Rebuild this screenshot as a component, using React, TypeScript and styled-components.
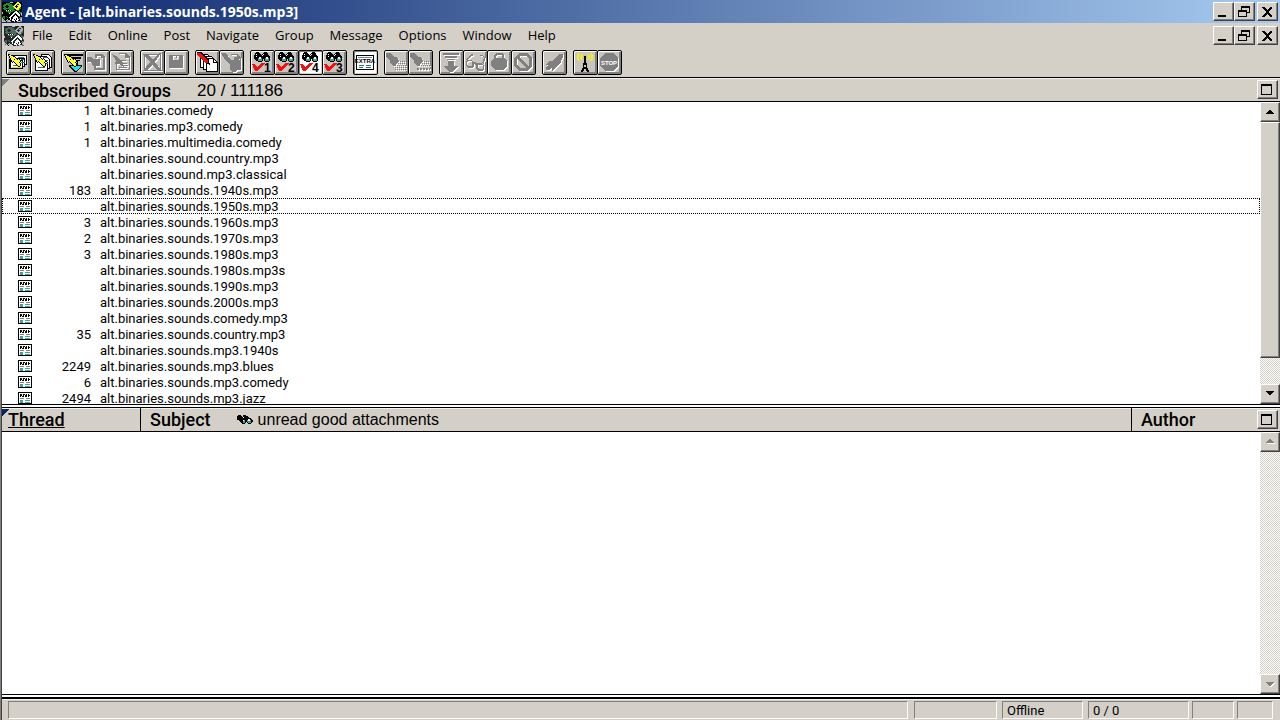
import React from "react";
import styled, { createGlobalStyle, css } from "styled-components";

const FACE = "#d4d0c8";
const SHADOW = "#808080";
const DARK = "#404040";
const MENU = '"Open Sans", "Noto Sans", sans-serif';
const LIST = 'Roboto, "Liberation Sans", sans-serif';
const ARIAL = '"Liberation Sans", Arial, sans-serif';

const Global = createGlobalStyle`
  * { box-sizing: border-box; }
  html, body { margin: 0; height: 100%; }
  #root { height: 100%; }
  button { font: inherit; color: inherit; padding: 0; margin: 0; border: 0; border-radius: 0; background: none; }
`;

const Frame = styled.div`
  display: flex;
  flex-direction: column;
  min-height: 100vh;
  height: 100%;
  background: ${FACE};
  border-left: 1px solid ${SHADOW};
  box-shadow: inset 1px 0 0 ${DARK};
  padding-left: 1px;
  color: #000;
  overflow: hidden;
`;

const TitleBar = styled.header`
  display: flex;
  align-items: center;
  height: 23px;
  padding-right: 2px;
  background: linear-gradient(90deg, #0a246a, #a6caf0);
  color: #fff;
`;

const Title = styled.h1`
  flex: 1;
  margin: 0 0 0 3px;
  font: bold 14px/20px "Open Sans", "Noto Sans", sans-serif;
  white-space: nowrap;
`;

const MenuRow = styled.div`
  display: flex;
  align-items: center;
  height: 25px;
  padding: 0 2px;
`;

const Menus = styled.nav`
  display: flex;
  flex: 1;
`;

const MenuItem = styled.button`
  padding: 0 8px 2px;
  font: 13px/20px ${MENU};
`;

const WindowButtons = styled.div`
  display: flex;
  & > :last-child { margin-left: 2px; }
`;

const raised = css`
  background: ${FACE};
  border: 1px solid;
  border-color: #fff ${DARK} ${DARK} #fff;
  box-shadow: inset -1px -1px 0 ${SHADOW};
`;

const CaptionButton = styled.button`
  ${raised}
  display: flex;
  align-items: center;
  justify-content: center;
  width: 21px;
  height: 19px;
  flex: none;
`;

const Toolbar = styled.div`
  display: flex;
  gap: 6px;
  height: 29px;
  padding: 2px 4px;
`;

const ToolGroup = styled.div`
  display: flex;
`;

const ToolButton = styled.button<{ $pressed?: boolean }>`
  width: 25px;
  height: 25px;
  border: 1px solid #000;
  border-radius: 2px;
  background: ${(p) => (p.$pressed ? "#fff" : "#c8c5be")};
  box-shadow: ${(p) =>
    p.$pressed
      ? `inset 1px 1px 0 ${SHADOW}, inset -1px -1px 0 ${FACE}`
      : `inset 1px 1px 0 #fff, inset -2px -2px 0 ${SHADOW}`};
  & + & { margin-left: -1px; }
  svg { display: block; }
`;

const Pane = styled.section<{ $grow: number }>`
  display: flex;
  flex-direction: column;
  flex: ${(p) => p.$grow} 1 0;
  min-height: 0;
  border-top: 1px solid #000;
  border-bottom: 1px solid #000;
`;

const PaneHead = styled.div<{ $fold: string }>`
  display: flex;
  align-items: stretch;
  height: 24px;
  flex: none;
  border-bottom: 1px solid #000;
  background: linear-gradient(135deg, ${(p) => p.$fold} 6px, transparent 6px) ${FACE};
  box-shadow: inset 0 1px 0 #f4f2ee;
`;

const GroupTitle = styled.h2`
  margin: 0 26px 0 16px;
  font: 500 18px/25px ${LIST};
`;

const GroupTotals = styled.span`
  flex: 1;
  font: 17px/25px ${ARIAL};
`;

const ColumnHead = styled.button<{ $grow?: boolean; $width?: number }>`
  flex: ${(p) => (p.$grow ? "1" : `0 0 ${p.$width}px`)};
  display: flex;
  align-items: center;
  text-align: left;
  font: 500 18px/24px ${LIST};
  padding-left: 9px;
  padding-top: 2px;
  border-left: 1px solid #000;
  &:first-child { border-left: 0; padding-left: 6px; text-decoration: underline; }
`;

const FilterNote = styled.span`
  display: flex;
  align-items: center;
  gap: 5px;
  margin-left: 26px;
  font: 16px/24px ${ARIAL};
`;

const HeadEnd = styled.div`
  display: flex;
  align-items: center;
  padding-right: 2px;
`;

const PaneBody = styled.div`
  display: flex;
  flex: 1;
  min-height: 0;
  background: #fff;
`;

const ListArea = styled.div`
  flex: 1;
  min-width: 0;
  overflow: hidden;
`;

const GroupTable = styled.table`
  width: 100%;
  border-collapse: collapse;
  table-layout: fixed;
  font: 13px/15px ${LIST};
`;

const GroupRow = styled.tr<{ $current: boolean }>`
  height: 16px;
  ${(p) => p.$current && "outline: 1px dotted #000; outline-offset: -1px;"}
`;

const IconCell = styled.td`
  width: 46px;
  padding: 0 0 0 16px;
  svg { display: block; }
`;

const CountCell = styled.td`
  width: 43px;
  padding: 1px 0 0;
  text-align: right;
`;

const NameCell = styled.td`
  padding: 1px 0 0 9px;
  white-space: nowrap;
`;

const Splitter = styled.div`
  height: 2px;
  flex: none;
  background: #fff;
`;

const ScrollTrack = styled.div`
  display: flex;
  flex-direction: column;
  width: 20px;
  flex: none;
  background: repeating-conic-gradient(#fff 0 25%, ${FACE} 0 50%) 0 0 / 2px 2px;
`;

const ScrollButton = styled.button`
  ${raised}
  display: flex;
  align-items: center;
  justify-content: center;
  height: 20px;
  flex: none;
`;

const ScrollRun = styled.div`
  flex: 1;
`;

const Thumb = styled.div`
  ${raised}
  height: 90%;
`;

const StatusBar = styled.footer`
  display: flex;
  flex: none;
  height: 23px;
  padding: 2px 7px 1px 6px;
  border-top: 2px solid #000;
  box-shadow: inset 0 1px 0 #f4f2ee;
  font: 13px/18px ${LIST};
`;

const StatusCell = styled.div<{ $width?: number; $gap?: number }>`
  flex: ${(p) => (p.$width ? `0 0 ${p.$width}px` : "1")};
  margin-left: ${(p) => p.$gap ?? 0}px;
  padding-left: 4px;
  border: 1px solid;
  border-color: ${SHADOW} #fff #fff ${SHADOW};
`;

/* ---------- drawings ---------- */

type PixelProps = { rows: string[]; colors: Record<string, string>; x?: number; y?: number };

/** Draws a small bitmap, one character for each dot. */
function Pixels({ rows, colors, x = 0, y = 0 }: PixelProps) {
  const dots: React.ReactNode[] = [];
  rows.forEach((row, r) => {
    let c = 0;
    while (c < row.length) {
      const ch = row[c];
      let n = 1;
      while (row[c + n] === ch) n++;
      if (colors[ch]) dots.push(<rect key={`${r}-${c}`} x={x + c} y={y + r} width={n} height={1} fill={colors[ch]} />);
      c += n;
    }
  });
  return <g shapeRendering="crispEdges">{dots}</g>;
}

const INK = { "#": "#000", w: "#fff", t: "#3f9f9a", g: "#808080", y: "#ffff30", c: "#00d8e8", r: "#e01010", G: "#209020", l: "#c0c0c0" };

const BINOCULARS = [
  "..###.....###...",
  ".#####...#####..",
  ".#w####.#w####..",
  "########w######.",
  "##w#############",
  "#####ww#####ww##",
  "####twwt###twwt#",
  ".###tttt#.#tttt#",
  "..##tttt#.#tttt#",
  "....####...####.",
];

const SMALL_BINOCULARS = [
  ".###..###.......",
  "#####.#####.....",
  "######w#####....",
  "##############..",
  "###########ww##.",
  "..####wt##twwt##",
  "...###tt##tttt##",
  "....##tt#.#ttt#.",
  ".....###...###..",
];

const NEWS = [
  "##############",
  "#wwwwwwwwwwww#",
  "#w##w##w#w#ww#",
  "#w##w#w##w##w#",
  "#w#w##w##w#ww#",
  "#wwwwwwwwwwww#",
  "#wggggwwggggw#",
  "#wwwwwwwwwwww#",
  "#wtttwwtttttw#",
  "#wtttwwwwwwww#",
  "#wtttwwtttttw#",
  "##############",
];

const APP = [
  "########lll####yy###",
  "####GGGG######yyyy##",
  "##GGGGGGGG###yy##yy#",
  "#GGG##GGGGG#yy#yyyy#",
  "#GG####GGGGyy###yyy#",
  "##GG##GGGGGGyy#yyyG#",
  "#GGGGGGGGGGGGyyyyGG#",
  "##GG###GGGGG##yyyG##",
  "####w#w#w#GGG##GG###",
  "####GGGGGGG##lw##G##",
  "l#####GGG###wwww#GGG",
  "l######w###ww#www#Gl",
  "##########ww###www#l",
  "#########ww##w##ww#g",
  "#GG#G###ww##www##g##",
  "GGG##G#ww##wwwww##gg",
  "l#G#####w##www#w#ggl",
  "ll###l##w#ww#w#ww#ll",
  "lgl#lgll##www#ww##gl",
  "llll#llll###l##lllgg",
];

function Icon({ rows, colors = INK, width, height }: { rows: string[]; colors?: Record<string, string>; width: number; height: number }) {
  return (
    <svg width={width} height={height} viewBox={`0 0 ${width} ${height}`} aria-hidden="true">
      <Pixels rows={rows} colors={colors} />
    </svg>
  );
}

function Tool({ children }: { children: React.ReactNode }) {
  return (
    <svg width="23" height="23" viewBox="0 0 23 23" aria-hidden="true" shapeRendering="crispEdges">
      {children}
    </svg>
  );
}

/** A disabled drawing: a white copy one dot down and right of the grey one. */
function Engraved({ children }: { children: React.ReactNode }) {
  return (
    <Tool>
      <g transform="translate(1 1)" fill="#fff" stroke="#fff" strokeWidth="0">{children}</g>
      <g fill="#808080" stroke="#808080" strokeWidth="0">{children}</g>
    </Tool>
  );
}

const BOLT = [
  "##...........",
  "#yy##........",
  ".#yyy##......",
  ".#yyyyy#.....",
  "..#yyyyy#.#..",
  "..#yyy#yy#y#.",
  "...#yyyyyyyy#",
  "...#y#yyyyyy#",
  "....#.#yyyy#.",
  ".......#yyyy#",
  "........#yyy#",
  ".........#yy#",
  "..........##.",
];

const Bolt = ({ x = 0 }: { x?: number }) => <Pixels rows={BOLT} colors={INK} x={x + 1} y={3} />;

const icons: Record<string, React.ReactNode> = {
  getHeaders: (
    <Tool>
      <path d="M6 4h14v10h-14z M4 6h14v10h-14z M2 8h14v10h-14z" fill="#000" />
      <path d="M7 5h12v8h-12z" fill="#fff" />
      <path d="M5 7h12v8h-12z" fill="#fff" stroke="#000" strokeWidth="1" />
      <path d="M3 9h12v8h-12z" fill="#fff" stroke="#000" strokeWidth="1" />
      <path d="M11 6h6v1h-6zM14 8h3v1h-3zM14 11h4v1h-4zM6 14h8v1h-8z" fill="#287878" />
      <path d="M5 16h10v1h-10z" fill="#e8e800" />
      <Bolt />
    </Tool>
  ),
  getBodies: (
    <Tool>
      <path d="M10 3h7l3 3v10h-10z" fill="#fff" stroke="#000" />
      <path d="M7 5h8l3 3v9h-11z" fill="#fff" stroke="#000" />
      <path d="M4 8h9l3 3v8h-12z" fill="#fff" stroke="#000" />
      <path d="M12 6h4v1h-4zM13 9h4v1h-4zM14 12h3v1h-3zM7 16h7v1h-7z" fill="#287878" />
      <Bolt x={1} />
    </Tool>
  ),
  getMarked: (
    <Tool>
      <path d="M4 3h17v2h-17zM6 6h13v2h-13zM8 9h10v1h-10z" fill="#000" />
      <path d="M11 10h5v4h4v2l-6 5h-1l-6 -5v-2h4z" fill="#000" />
      <path d="M12 11h3v4h4l-5 5h-1l-5 -5h4z" fill="#20e0f0" />
      <Bolt x={1} />
    </Tool>
  ),
  cancelDoc: (
    <Engraved>
      <path d="M9 3h7l3 3v13h-11v-4h2v2h7v-10h-2v-2h-4v2h-2z" />
      <path d="M1 6h4l3 2h6v7h-7l-2-4h-4z" />
    </Engraved>
  ),
  boltDoc: (
    <Engraved>
      <path d="M9 2h7l4 4v13h-14v-6h1v5h12v-11h-4v-4h-6z" />
      <path d="M2 3l6 3l2 3l2 1l3 7l-6-4h-4l1-3z" />
      <path d="M11 9h5v1h-5zM13 12h4v1h-4zM14 14h4v1h-4zM9 16h8v1h-8z" />
    </Engraved>
  ),
  remove: (
    <Engraved>
      <path d="M3 3h17v17h-17zM4 4v15h15v-15z" fillRule="evenodd" />
      <path d="M2 3h4l6 6l6-7h2l-6 9l7 9h-4l-6-6l-6 6h-3l7-9z" />
    </Engraved>
  ),
  save: (
    <Engraved>
      <path d="M4 4h13l1 1v12h-14zM8 5v4h6v-4h-2v2h-1v-2z" fillRule="evenodd" />
    </Engraved>
  ),
  markRead: (
    <Tool>
      <path d="M4 3h7l2 2v11h-9z" fill="#fff" stroke="#000" />
      <path d="M7 5h8l2 2v11h-10z" fill="#fff" stroke="#000" />
      <path d="M10 7h7l4 4v9h-11z" fill="#fff" stroke="#000" />
      <path d="M17 7v4h4" fill="none" stroke="#000" />
      <path d="M1 1h4l8 8l1 5l-5-2l-8-8z" fill="#000" />
      <path d="M1 2h3l8 8v2h-2l-9-8z" fill="#e81010" />
    </Tool>
  ),
  markKeep: (
    <Engraved>
      <path d="M1 2h5l5 7h3v-3h2l4 4v9h-3l-2 2h-3l-2-3v-4l-6-7z" />
      <path d="M11 3h6l4 4v12h-1v-11h-3v-4h-6z" />
    </Engraved>
  ),
  usenet: (
    <Tool>
      <path d="M2 4h18v15h-18zM3 5v13h16v-13z" fillRule="evenodd" />
      <text x="11" y="12" textAnchor="middle" fontFamily="Liberation Sans, sans-serif" fontSize="6" fontWeight="bold">EXTRA</text>
      <path d="M5 14h5v1h-5zM5 16h4v1h-4zM12 14h5v1h-5zM12 16h5v1h-5z" fill="#287878" />
      <path d="M4 6h14v1h-14z" fill="#808080" />
    </Tool>
  ),
  torch: (
    <Engraved>
      <path d="M1 2h4l3 3l5 2l1 3l-5 5l-3-2l-1-3l-4-5z" />
      <path d="M13 10.500h8M11 12.500h10M10 14.500h11M10 16.500h11M10 18.500h11" strokeWidth="1" strokeDasharray="1 1" />
    </Engraved>
  ),
  torchText: (
    <Engraved>
      <path d="M1 2h4l3 3l5 2l1 3l-5 5l-3-2l-1-3l-4-5z" />
      <path d="M13 10.500h8M11 12.500h10M10 14.500h11" strokeWidth="1" strokeDasharray="1 1" />
      <path d="M8 18h13" strokeWidth="2" strokeDasharray="2 1" />
    </Engraved>
  ),
  next: (
    <Engraved>
      <path d="M3 2h16v2h-16zM5 5h12v2h-12zM7 8h8v1h-8zM8 10h6v5h4v1l-6 5h-2l-6-5v-1h4z" />
    </Engraved>
  ),
  glasses: (
    <Engraved>
      <path d="M3 9h4l2 2h2l2 1h4l3 2v4l-2 2h-4l-2-2v-4l-2-1v2l-2 2h-4l-2-2v-4zM4 10l-1 2v2l1 1h3l1-1v-3l-1-1zM14 14v3l1 1h3l1-1v-3z" fillRule="evenodd" />
      <path d="M2 9l5-6h2v2l-1 0v-1l-5 6zM18 12l2-5l-2-2h-2v-1h3l2 3l-1 7z" />
    </Engraved>
  ),
  kill: (
    <Engraved>
      <path d="M8 2h6l2 2v3l3 3v5l-4 4h-8l-4-4v-5l3-3v-3zM9 4l-1 1v2l6 0v-2l-1-1z" fillRule="evenodd" />
    </Engraved>
  ),
  ignore: (
    <Engraved>
      <path d="M7 2h8l5 5v8l-5 5h-8l-5-5v-8zM8 5l-1 1l9 9l1-1v-6l-3-3zM5 8v6l3 3h6l-9-9z" fillRule="evenodd" />
    </Engraved>
  ),
  launch: (
    <Engraved>
      <path d="M17 3h3v3l-3 7l-5 4l-2 3h-1v-3l-3 2h-3v-2l2-3h-3l4-4h3z" />
    </Engraved>
  ),
  online: (
    <Tool>
      <path
        d="M4 2h2v1h-2zM3 3h2v6h-2zM4 9h2v1h-2zM7 3h2v1h-2zM6 4h2v4h-2zM7 8h2v1h-2zM13 3h2v1h-2zM14 4h2v4h-2zM13 8h2v1h-2zM16 2h2v1h-2zM17 3h2v6h-2zM16 9h2v1h-2z"
        fill="#f4f020"
      />
      <path d="M10 5h2v8h-2zM9 12h4v2h-4zM9 14h1v2h2v-2h1v3h1v3h-2v-2h-2v2h-2v-3h1zM7 19h2v2h-2zM13 19h2v2h-2z" fill="#000" />
    </Tool>
  ),
  stop: (
    <Tool>
      <path d="M8 3h8l5 5v8l-5 5h-8l-5-5v-8z" fill="#fff" />
      <path d="M7 2h8l5 5v8l-5 5h-8l-5-5v-8z" fill="#808080" />
      <text x="11" y="14" textAnchor="middle" fontFamily="Liberation Sans, sans-serif" fontSize="6" fontWeight="bold" fill="#fff">STOP</text>
    </Tool>
  ),
};

const filterIcon = (digit: string) => (
  <Tool>
    <Pixels rows={BINOCULARS} colors={INK} x={3} y={1} />
    <path d="M1 13h3l2 3l5-4h3l-8 8h-2z" fill="#f01010" />
    <text x="13" y="21" fontFamily="Liberation Sans, sans-serif" fontSize="12" fontWeight="bold">{digit}</text>
  </Tool>
);
["1", "2", "4", "3"].forEach((d) => (icons[`filter${d}`] = filterIcon(d)));

/* ---------- content ---------- */

type ToolSpec = { icon: string; label: string; pressed?: boolean };

const tools: ToolSpec[][] = [
  [{ icon: "getHeaders", label: "Get new headers in subscribed groups" }, { icon: "getBodies", label: "Get new headers in selected groups" }],
  [{ icon: "getMarked", label: "Get marked message bodies" }, { icon: "cancelDoc", label: "Get selected bodies" }, { icon: "boltDoc", label: "Mark for retrieval" }],
  [{ icon: "remove", label: "Delete" }, { icon: "save", label: "Save message" }],
  [{ icon: "markRead", label: "Post new message" }, { icon: "markKeep", label: "Post follow-up" }],
  [
    { icon: "filter1", label: "View filter 1" },
    { icon: "filter2", label: "View filter 2" },
    { icon: "filter4", label: "View filter 4", pressed: true },
    { icon: "filter3", label: "View filter 3" },
  ],
  [{ icon: "usenet", label: "Show subscribed groups", pressed: true }],
  [{ icon: "torch", label: "Find" }, { icon: "torchText", label: "Find again" }],
  [
    { icon: "next", label: "Skip to next" },
    { icon: "glasses", label: "Watch thread" },
    { icon: "kill", label: "Keep message" },
    { icon: "ignore", label: "Ignore thread" },
  ],
  [{ icon: "launch", label: "Launch attachments" }],
  [{ icon: "online", label: "Go online" }, { icon: "stop", label: "Stop" }],
];

const menus = ["File", "Edit", "Online", "Post", "Navigate", "Group", "Message", "Options", "Window", "Help"];

const groups: [string, string][] = [
  ["1", "alt.binaries.comedy"],
  ["1", "alt.binaries.mp3.comedy"],
  ["1", "alt.binaries.multimedia.comedy"],
  ["", "alt.binaries.sound.country.mp3"],
  ["", "alt.binaries.sound.mp3.classical"],
  ["183", "alt.binaries.sounds.1940s.mp3"],
  ["", "alt.binaries.sounds.1950s.mp3"],
  ["3", "alt.binaries.sounds.1960s.mp3"],
  ["2", "alt.binaries.sounds.1970s.mp3"],
  ["3", "alt.binaries.sounds.1980s.mp3"],
  ["", "alt.binaries.sounds.1980s.mp3s"],
  ["", "alt.binaries.sounds.1990s.mp3"],
  ["", "alt.binaries.sounds.2000s.mp3"],
  ["", "alt.binaries.sounds.comedy.mp3"],
  ["35", "alt.binaries.sounds.country.mp3"],
  ["", "alt.binaries.sounds.mp3.1940s"],
  ["2249", "alt.binaries.sounds.mp3.blues"],
  ["6", "alt.binaries.sounds.mp3.comedy"],
  ["2494", "alt.binaries.sounds.mp3.jazz"],
];

function Caption({ kind, label }: { kind: "min" | "restore" | "close" | "max"; label: string }) {
  return (
    <CaptionButton type="button" aria-label={label}>
      <svg width="15" height="13" viewBox="0 0 15 13" shapeRendering="crispEdges" aria-hidden="true">
        {kind === "min" && <rect x="2" y="10" width="8" height="2" />}
        {kind === "restore" && (
          <path d="M4 1h9v7h-3v4h-9v-7h3zM5 3v2h5v2h2v-4zM2 7v4h7v-4z" fillRule="evenodd" />
        )}
        {kind === "close" && <path d="M2 2h2l3 3l3-3h2v1l-4 4l4 4v1h-2l-3-3l-3 3h-2v-1l4-4l-4-4z" />}
        {kind === "max" && <path d="M1 1h11v11h-11zM2 3v8h9v-8z" fillRule="evenodd" />}
      </svg>
    </CaptionButton>
  );
}

function CaptionSet({ target }: { target: string }) {
  return (
    <WindowButtons>
      <Caption kind="min" label={`Minimize ${target}`} />
      <Caption kind="restore" label={`Restore ${target}`} />
      <Caption kind="close" label={`Close ${target}`} />
    </WindowButtons>
  );
}

function Scrollbar({ enabled }: { enabled: boolean }) {
  const arrow = (d: string) => (
    <svg width="11" height="7" viewBox="0 0 11 7" shapeRendering="crispEdges" aria-hidden="true">
      {!enabled && <path d={d} fill="#fff" transform="translate(1 1)" />}
      <path d={d} fill={enabled ? "#000" : SHADOW} />
    </svg>
  );
  return (
    <ScrollTrack>
      <ScrollButton type="button" aria-label="Scroll up" disabled={!enabled}>{arrow("M4 1h1L9 5H0z")}</ScrollButton>
      <ScrollRun>{enabled && <Thumb />}</ScrollRun>
      <ScrollButton type="button" aria-label="Scroll down" disabled={!enabled}>{arrow("M0 1H9L5 5h-1z")}</ScrollButton>
    </ScrollTrack>
  );
}

export default function App() {
  return (
    <Frame>
      <Global />
      <TitleBar>
        <Icon rows={APP} width={20} height={20} />
        <Title>Agent - [alt.binaries.sounds.1950s.mp3]</Title>
        <CaptionSet target="Agent" />
      </TitleBar>
      <MenuRow>
        <Icon rows={APP} colors={{ "#": "#202828", G: "#506860", w: "#fff", y: "#a8b0b0", l: "#b8c8c8", g: "#707878" }} width={20} height={20} />
        <Menus aria-label="Main menu">
          {menus.map((m) => (
            <MenuItem type="button" key={m}>{m}</MenuItem>
          ))}
        </Menus>
        <CaptionSet target="folder" />
      </MenuRow>
      <Toolbar>
        {tools.map((group) => (
          <ToolGroup key={group[0].icon}>
            {group.map((t) => (
              <ToolButton type="button" key={t.icon} $pressed={t.pressed} aria-pressed={t.pressed} aria-label={t.label}>
                {icons[t.icon]}
              </ToolButton>
            ))}
          </ToolGroup>
        ))}
      </Toolbar>

      <Pane $grow={328}>
        <PaneHead $fold={SHADOW}>
          <GroupTitle>Subscribed Groups</GroupTitle>
          <GroupTotals>20 / 111186</GroupTotals>
          <HeadEnd>
            <Caption kind="max" label="Maximize groups" />
          </HeadEnd>
        </PaneHead>
        <PaneBody>
          <ListArea>
            <GroupTable aria-label="Subscribed Groups">
              <tbody>
                {groups.map(([count, name]) => (
                  <GroupRow key={name} $current={name === "alt.binaries.sounds.1950s.mp3"}>
                    <IconCell><Icon rows={NEWS} width={14} height={12} /></IconCell>
                    <CountCell>{count}</CountCell>
                    <NameCell>{name}</NameCell>
                  </GroupRow>
                ))}
              </tbody>
            </GroupTable>
          </ListArea>
          <Scrollbar enabled />
        </PaneBody>
      </Pane>
      <Splitter />
      <Pane $grow={288}>
        <PaneHead $fold="#0a246a">
          <ColumnHead type="button" $width={138}>Thread</ColumnHead>
          <ColumnHead type="button" $grow>
            Subject
            <FilterNote>
              <Icon rows={SMALL_BINOCULARS} width={16} height={11} />
              unread good attachments
            </FilterNote>
          </ColumnHead>
          <ColumnHead type="button" $width={126}>Author</ColumnHead>
          <HeadEnd>
            <Caption kind="max" label="Maximize messages" />
          </HeadEnd>
        </PaneHead>
        <PaneBody>
          <ListArea />
          <Scrollbar enabled={false} />
        </PaneBody>
      </Pane>
      <Splitter />
      <StatusBar>
        <StatusCell />
        <StatusCell $width={83} $gap={6} />
        <StatusCell $width={81} $gap={5}>Offline</StatusCell>
        <StatusCell $width={101} $gap={5}>0 / 0</StatusCell>
        <StatusCell $width={42} $gap={3} />
        <StatusCell $width={36} $gap={3} />
      </StatusBar>
    </Frame>
  );
}
